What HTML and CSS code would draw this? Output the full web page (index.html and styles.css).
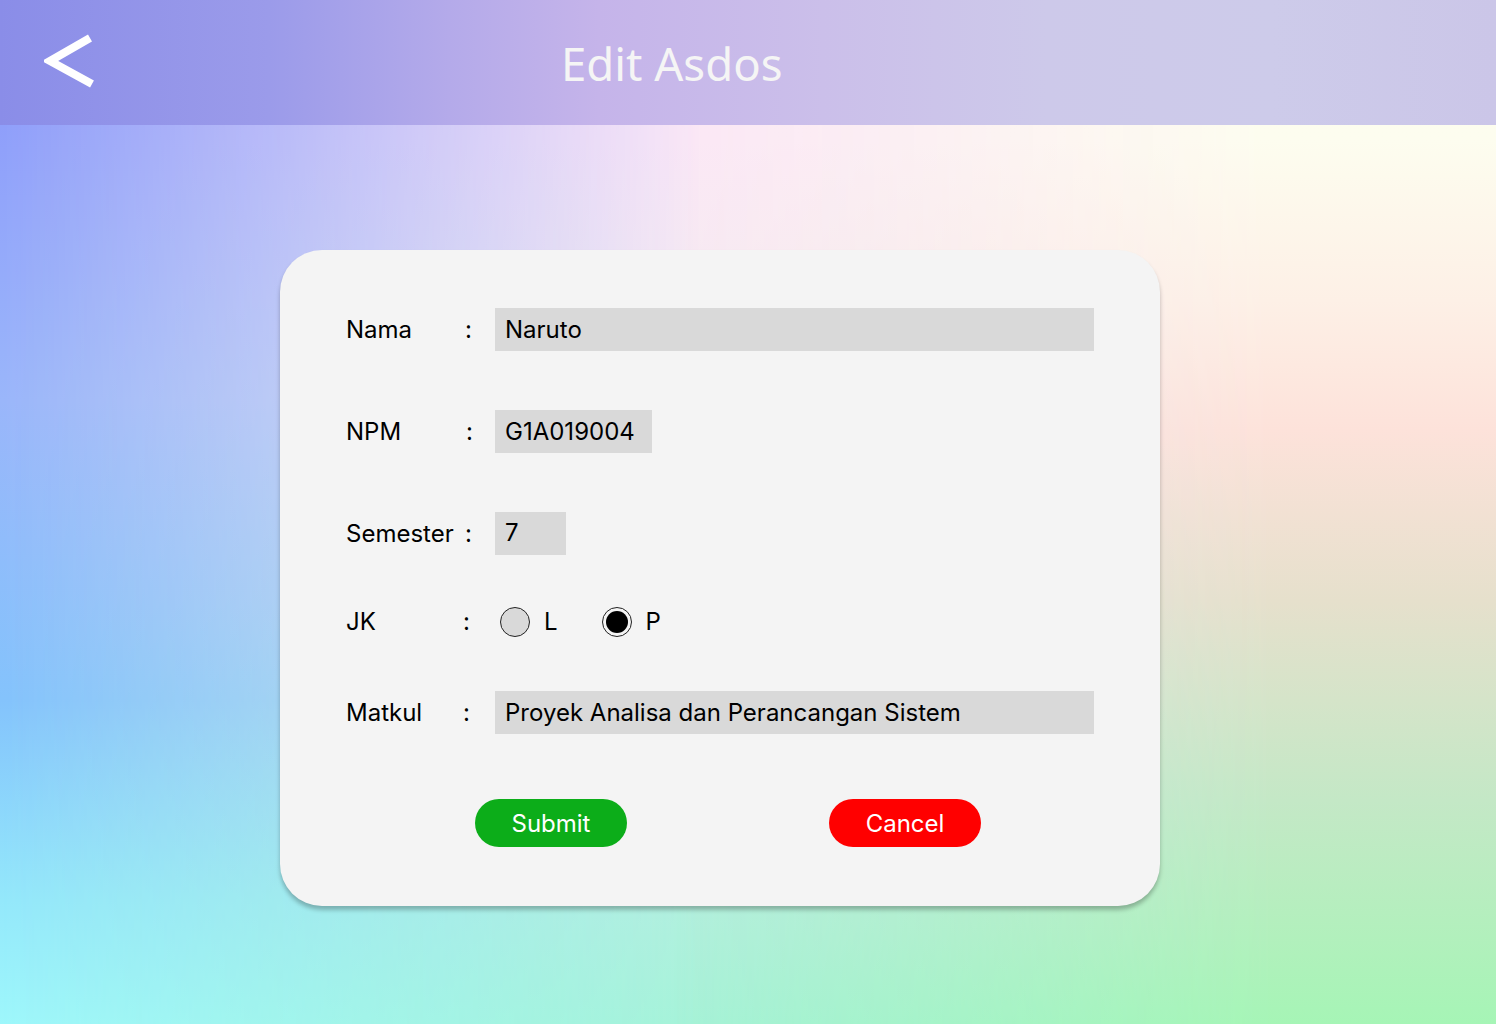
FILE: index.html
```html
<!DOCTYPE html>
<html lang="id">
<head>
<meta charset="utf-8">
<title>Edit Asdos</title>
<link rel="stylesheet" href="styles.css">
</head>
<body>
<div class="page">
  <header class="topbar">
    <a class="back" href="#" aria-label="Kembali">
      <svg width="52" height="56" viewBox="0 0 52 56">
        <polyline points="46,5 6,28 48,51" fill="none" stroke="#ffffff" stroke-width="8" stroke-linejoin="miter" stroke-miterlimit="10"/>
      </svg>
    </a>
    <h1 class="title">Edit Asdos</h1>
  </header>

  <main class="content">
    <form class="card">
      <div class="row">
        <span class="label">Nama</span>
        <span class="colon">:</span>
        <div class="field field-wide">Naruto</div>
      </div>
      <div class="row">
        <span class="label">NPM</span>
        <span class="colon colon-npm">:</span>
        <div class="field field-npm">G1A019004</div>
      </div>
      <div class="row">
        <span class="label">Semester</span>
        <span class="colon">:</span>
        <div class="field field-sem">7</div>
      </div>
      <div class="row row-jk">
        <span class="label">JK</span>
        <span class="colon colon-jk">:</span>
        <div class="radios">
          <span class="radio"></span><span class="radio-text">L</span>
          <span class="radio radio-on"><span class="dot"></span></span><span class="radio-text">P</span>
        </div>
      </div>
      <div class="row row-matkul">
        <span class="label">Matkul</span>
        <span class="colon colon-jk">:</span>
        <div class="field field-wide">Proyek Analisa dan Perancangan Sistem</div>
      </div>
      <div class="actions">
        <button type="button" class="btn btn-submit">Submit</button>
        <button type="button" class="btn btn-cancel">Cancel</button>
      </div>
    </form>
  </main>
</div>
</body>
</html>
```

FILE: styles.css
```css
* { box-sizing: border-box; }

html, body {
  margin: 0;
  padding: 0;
}

body {
  width: 1496px;
  height: 1024px;
  overflow: hidden;
  font-family: "Inter", "Liberation Sans", sans-serif;
  background: linear-gradient(to bottom,
    #8e9efa 0px,
    #8f9ffa 125px,
    #9ab6fa 400px,
    #84c3fc 700px,
    #94e8fb 900px,
    #9ef7fb 1024px);
}

.page {
  position: relative;
  width: 1496px;
  height: 1024px;
  isolation: isolate;
}

/* middle column of the mesh gradient */
.page::before {
  content: "";
  position: absolute;
  inset: 0;
  z-index: -1;
  background: linear-gradient(to bottom,
    #fbe6f7 0px,
    #fbe7f6 140px,
    #f6eaf2 300px,
    #dfe8ea 600px,
    #b8eee0 850px,
    #a6f2d8 1024px);
  -webkit-mask-image: linear-gradient(to right, transparent 0%, #000 47%, #000 100%);
  mask-image: linear-gradient(to right, transparent 0%, #000 47%, #000 100%);
}

/* right column of the mesh gradient */
.page::after {
  content: "";
  position: absolute;
  inset: 0;
  z-index: -1;
  background: linear-gradient(to bottom,
    #fcfdee 0px,
    #fdfdef 140px,
    #fdf0e6 300px,
    #fde2da 430px,
    #e6e0cc 600px,
    #c4e8c6 800px,
    #a6f5b6 1024px);
  -webkit-mask-image: linear-gradient(to right, transparent 45%, #000 85%, #000 100%);
  mask-image: linear-gradient(to right, transparent 45%, #000 85%, #000 100%);
}

.topbar {
  height: 125px;
  display: flex;
  align-items: center;
  padding-left: 44px;
  background: linear-gradient(to right,
    #8a8de8 0%,
    #9b9bea 18%,
    #b4aaea 30%,
    #c5b4ea 40%,
    #cbbfea 55%,
    #cdc9ea 70%,
    #cdcbea 85%,
    #cbc6e8 100%);
}

.back {
  display: block;
  width: 52px;
  height: 56px;
  margin-top: -4px;
}

.back svg { display: block; }

.title {
  margin: 0 0 0 465px;
  padding-top: 2px;
  font-family: "Noto Sans", "Open Sans", sans-serif;
  font-weight: 400;
  font-size: 45.5px;
  color: #f5f5f5;
  line-height: 1;
}

.content {
  display: flex;
  justify-content: flex-start;
  padding-top: 125px;
  padding-left: 280px;
}

.card {
  width: 880px;
  height: 656px;
  margin: 0;
  padding: 58px 66px 0 66px;
  background: #f4f4f4;
  border-radius: 42px;
  box-shadow: 0 4px 4px rgba(0, 0, 0, 0.25);
  display: flex;
  flex-direction: column;
}

.row {
  display: grid;
  grid-template-columns: 120px 29px 1fr;
  align-items: center;
  height: 43px;
  margin-bottom: 59px;
  font-size: 24px;
  color: #000;
}

.row-jk {
  height: 44px;
  margin-top: -14px;
  margin-bottom: 47px;
}

.row-matkul { margin-bottom: 65px; }

.label { line-height: 1; }

.colon {
  line-height: 1;
  margin-left: -1px;
}
.colon-npm { margin-left: 0; }
.colon-jk { margin-left: -3px; }

.field {
  height: 43px;
  background: #d9d9d9;
  padding: 0 10px;
  display: flex;
  align-items: center;
  font-size: 24px;
  color: #000;
}

.field-wide { width: 599px; }
.field-npm { width: 157px; }
.field-sem { width: 71px; padding-bottom: 3px; }

.radios {
  display: flex;
  align-items: center;
  padding-left: 5px;
}

.radio {
  width: 30px;
  height: 30px;
  border-radius: 50%;
  border: 1px solid #222;
  background: #d9d9d9;
  display: flex;
  align-items: center;
  justify-content: center;
  flex: none;
}

.radio-on { background: #f4f4f4; }

.dot {
  width: 22px;
  height: 22px;
  border-radius: 50%;
  background: #000;
}

.radio-text {
  margin-left: 14px;
  margin-right: 44px;
  font-size: 24px;
  line-height: 1;
}

.actions {
  display: flex;
  padding-left: 129px;
  gap: 202px;
}

.btn {
  width: 152px;
  height: 48px;
  border: none;
  border-radius: 24px;
  font-family: "Inter", "Liberation Sans", sans-serif;
  font-size: 24px;
  color: #fff;
  padding: 0;
  cursor: pointer;
}

.btn-submit { background: #0cad19; }
.btn-cancel { background: #ff0000; }
```
